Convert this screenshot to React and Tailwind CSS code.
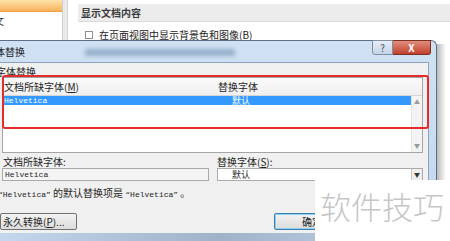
export default function App() {
  return (
    <div className="relative w-[450px] h-[241px] overflow-hidden bg-white font-['Noto_Sans_CJK_SC',sans-serif] text-[#1e1e1e]">
      {/* Word options window behind the dialog */}
      <div className="flex h-full">
        <div className="w-[63px] border-r border-[#cfcfcf]">
          <div className="h-[12px] bg-gradient-to-b from-[#fde3aa] to-[#f8b25a] border-b border-[#e9a047]" />
          <div className="-ml-[6px] pt-[3px] text-[10px] leading-[12px]">文</div>
        </div>
        <div className="w-[5px] bg-[#e9e9e9] border-r border-[#d4d4d4]" />
        <div className="flex-1 pl-[10px] pt-[4px]">
          <div className="h-[18px] bg-[#ececec] border-b border-[#dadada] pl-[3px] text-[10px] leading-[18px] font-bold text-[#3c3c3c]">
            显示文档内容
          </div>
          <div className="flex items-center gap-[6px] pl-[7px] mt-[8px] text-[10px] leading-[10px]">
            <span className="w-[8px] h-[8px] border border-[#8f8f8f] bg-white" />
            <span>在页面视图中显示背景色和图像(<u>B</u>)</span>
          </div>
        </div>
      </div>

      {/* Font substitution dialog */}
      <div className="absolute left-0 top-[40px] flex w-[446px] h-[201px]">
        <div className="relative flex flex-col w-[437px] rounded-tr-[6px] border-t border-r border-[#5d6f86] bg-gradient-to-b from-[#d0e1f3] to-[#c1d6ed]">
          {/* title bar */}
          <div className="relative flex items-center h-[21px] text-[10px]">
            <span className="-ml-[5px] text-[#1a1a1a]">体替换</span>
            <div className="absolute left-[85px] top-[8px] w-[150px] h-[7px] bg-[#7f9abb] blur-[2px] opacity-70" />
            <div className="absolute right-[5px] top-[-1px] flex">
              <div className="flex items-center justify-center w-[21px] h-[15px] rounded-bl-[3px] border border-[#7f8ea3] bg-gradient-to-b from-[#e6eef7] to-[#c5d3e4] text-[10px] leading-none text-[#3c4a5c]">
                ?
              </div>
              <div className="flex items-center justify-center w-[38px] h-[15px] rounded-br-[3px] border border-l-0 border-[#7b3024] bg-gradient-to-b from-[#e08c7c] to-[#c0402c] text-[10px] font-bold leading-none text-white">
                X
              </div>
            </div>
          </div>

          {/* body */}
          <div className="flex flex-1 pr-[7px]">
            <div className="flex flex-col flex-1 bg-[#f0f0f0] border-t border-r border-[#8ba3bf] text-[10px]">
              <div className="-ml-[4px] pt-[3px] h-[14px] leading-[11px]">字体替换</div>

              {/* list view */}
              <div className="ml-[2px] w-[421px] h-[76px] border border-[#a5a5a5] bg-white flex flex-col">
                <div className="flex h-[18px] items-center bg-gradient-to-b from-[#fafafa] to-[#f0f0f0] border-b border-[#d5d5d5]">
                  <span className="w-[215px] pl-[1px]">文档所缺字体(<u>M</u>)</span>
                  <span>替换字体</span>
                </div>
                <div className="flex flex-1">
                  <div className="flex-1">
                    <div className="flex h-[9px] items-center bg-[#3399ff] text-white">
                      <span className="w-[229px] pl-[1px] font-['Liberation_Mono',monospace] text-[8px] leading-[9px]">Helvetica</span>
                      <span className="text-[9px] leading-[9px]">默认</span>
                    </div>
                  </div>
                  <div className="flex flex-col justify-between w-[11px] bg-[#f3f3f3] border-l border-[#e4e4e4] py-[3px] text-[6px] leading-none text-[#9a9a9a] items-center">
                    <span>▲</span>
                    <span>▼</span>
                  </div>
                </div>
              </div>

              {/* current selection */}
              <div className="flex h-[14px] mt-[1px] items-center">
                <span className="w-[217px] pl-[3px]">文档所缺字体:</span>
                <span>替换字体(<u>S</u>):</span>
              </div>
              <div className="flex h-[13px] items-stretch">
                <div className="ml-[2px] w-[207px] border border-[#aaaaaa] bg-[#f4f4f4] pl-[2px] font-['Liberation_Mono',monospace] text-[8px] leading-[11px]">
                  Helvetica
                </div>
                <div className="ml-[8px] flex w-[206px] border border-[#aaaaaa] bg-white">
                  <span className="flex-1 pl-[14px] text-[9px] leading-[11px]">默认</span>
                  <span className="w-[11px] border-l border-[#c8c8c8] bg-[#eeeeee] text-[6px] leading-[11px] text-center text-[#333]">▼</span>
                </div>
              </div>
              <div className="mt-[6px] h-[12px] -ml-[2px] leading-[12px] whitespace-nowrap">
                <span className="font-['Liberation_Mono',monospace] text-[8px]">“Helvetica”</span> 的默认替换项是 <span className="font-['Liberation_Mono',monospace] text-[8px]">“Helvetica”</span> 。
              </div>

              {/* buttons */}
              <div className="flex mt-[14px] items-start">
                <div className="w-[77px] h-[17px] border border-[#707070] rounded-[2px] bg-gradient-to-b from-[#f2f2f2] to-[#dcdcdc] pl-[2px] leading-[15px]">
                  永久转换(<u>P</u>)...
                </div>
                <div className="ml-[197px] w-[76px] h-[17px] border border-[#3c7fb1] rounded-[2px] bg-gradient-to-b from-[#f2f2f2] to-[#dcdcdc] ring-1 ring-inset ring-[#8ed0f2] text-center leading-[15px]">
                  确定
                </div>
              </div>
            </div>
          </div>

          {/* bottom frame */}
          <div className="h-[8px] bg-gradient-to-r from-[#c4d7ee] via-[#9fb2c8] to-[#c4d7ee]" />
        </div>
        <div className="w-[9px] mt-[4px] bg-gradient-to-r from-[#8c8c8c]/60 to-white/0" />
      </div>

      {/* red annotation box */}
      <div className="absolute left-[2px] top-[75px] w-[427px] h-[54px] border-2 border-[#e62b2b] rounded-[3px]" />

      {/* watermark */}
      <div className="absolute right-0 bottom-0 w-[135px] h-[61px] bg-white pl-[5px] pt-[9px] text-[31px] leading-[34px] text-[#c6c6c6] font-light whitespace-nowrap">
        软件技巧
      </div>
    </div>
  );
}
